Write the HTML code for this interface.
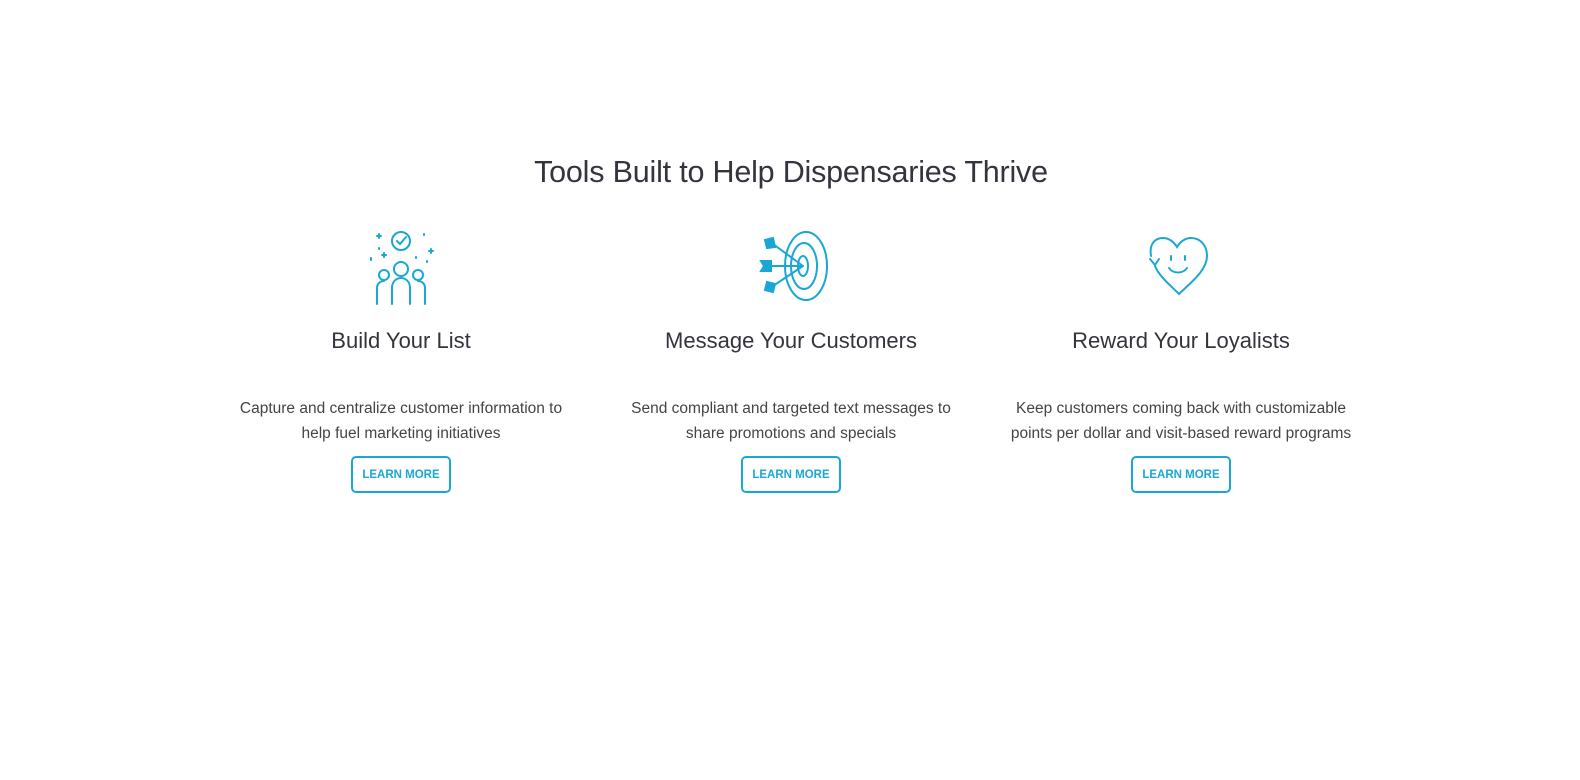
<!DOCTYPE html>
<html><head><meta charset="utf-8"><style>
html,body{margin:0;padding:0;width:1580px;height:780px;background:#fff;overflow:hidden;font-family:"Liberation Sans",sans-serif;color:#34343e}
h1{position:absolute;top:155px;left:6px;width:1570px;text-align:center;margin:0;font-size:30.5px;font-weight:normal;letter-spacing:-0.2px}
.col{position:absolute;top:226px;width:380px;text-align:center}
.col svg{display:block;margin:0 auto}
.col h2{position:absolute;top:102px;left:0;width:100%;margin:0;font-size:22px;font-weight:normal}
.col p{position:absolute;top:170px;left:-20px;width:420px;margin:0;font-size:15.5px;line-height:25px;color:#444}
.btn{position:absolute;top:229px;left:140px;width:96px;height:33px;border:2px solid #1aa7d6;border-radius:5px;color:#1aa7d6;font-size:11.5px;line-height:35px;font-weight:600}
</style></head><body>
<h1>Tools Built to Help Dispensaries Thrive</h1>

<div class="col" style="left:211px">
<svg width="80" height="80" viewBox="0 0 80 80" fill="none" stroke="#1aa7d6" stroke-width="2" stroke-linecap="round">
<circle cx="40" cy="15" r="9"/><path d="M36 15l3 3 6-7"/>
<circle cx="40" cy="43" r="7"/><path d="M31 78V62c0-6 4-10 9-10s9 4 9 10v16"/>
<circle cx="23" cy="49" r="5"/><path d="M16 78V62c0-4 3-7 7-7"/>
<circle cx="57" cy="49" r="5"/><path d="M64 78V62c0-4-3-7-7-7"/>
<path d="M18 8v4M16 10h4M23 27v4M21 29h4M70 23v4M68 25h4M10 32v2M63 8v1M18 22v1M66 35v1M55 31v1"/>
</svg>
<h2>Build Your List</h2>
<p>Capture and centralize customer information to<br>help fuel marketing initiatives</p>
<div class="btn" style="top:230px">LEARN MORE</div>
</div>

<div class="col" style="left:601px">
<svg width="80" height="80" viewBox="0 0 80 80" fill="none" stroke="#1aa7d6" stroke-width="2" stroke-linecap="round">
<ellipse cx="55" cy="40" rx="21" ry="34"/><ellipse cx="53" cy="40" rx="13" ry="23"/><ellipse cx="52" cy="40" rx="5" ry="10"/>
<path d="M20 40h32M22 18l30 22M22 60l30-20"/>
<path d="M10 35h10v10H10l3-5z" fill="#1aa7d6"/>
<path d="M14 14l8-2 2 9-8 1z" fill="#1aa7d6"/>
<path d="M14 64l8 2 2-8-8-2z" fill="#1aa7d6"/>
</svg>
<h2>Message Your Customers</h2>
<p>Send compliant and targeted text messages to<br>share promotions and specials</p>
<div class="btn" style="top:230px">LEARN MORE</div>
</div>

<div class="col" style="left:991px">
<svg width="80" height="80" viewBox="0 0 80 80" fill="none" stroke="#1aa7d6" stroke-width="2" stroke-linecap="round">
<path d="M10 30C8 18 14 12 22 12c6 0 11 4 14 9 3-5 8-9 14-9 9 0 16 7 16 18 0 15-18 28-28 38C28 58 18 50 14 40"/>
<path d="M9 33l5 6 4-6"/>
<path d="M30 30v4M44 30v4M28 42c4 6 14 6 18 0"/>
</svg>
<h2>Reward Your Loyalists</h2>
<p>Keep customers coming back with customizable<br>points per dollar and visit-based reward programs</p>
<div class="btn" style="top:230px">LEARN MORE</div>
</div>
</body></html>
